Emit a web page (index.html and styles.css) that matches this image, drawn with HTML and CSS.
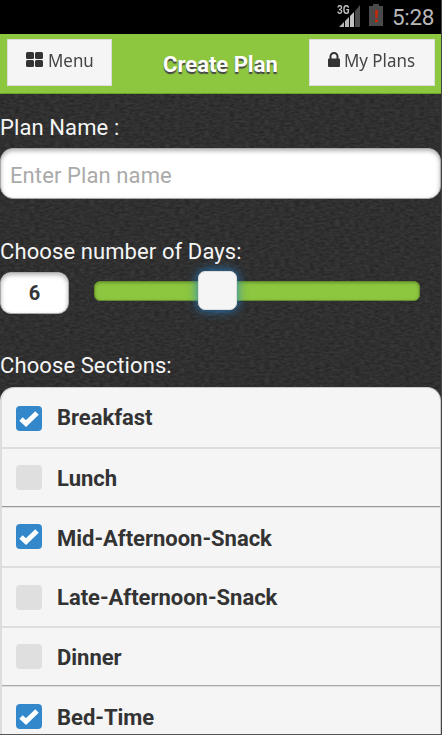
FILE: index.html
```html
<!DOCTYPE html>
<html lang="en">
<head>
<meta charset="utf-8">
<title>Create Plan</title>
<link rel="stylesheet" href="styles.css">
</head>
<body>
<svg class="texture" width="442" height="641" aria-hidden="true">
  <filter id="grain" x="0" y="0" width="100%" height="100%" color-interpolation-filters="sRGB">
    <feTurbulence type="fractalNoise" baseFrequency="0.2 0.45" numOctaves="3" seed="4"/>
    <feColorMatrix values="0.12 0 0 0 0.127  0.12 0 0 0 0.127  0.12 0 0 0 0.127  0 0 0 0 1"/>
  </filter>
  <rect width="442" height="641" filter="url(#grain)"/>
</svg>
<div class="screen">
  <div class="status">
    <svg class="signal" width="24" height="24" viewBox="0 0 24 24">
      <path d="M2 23L7 18V23Z" fill="#b5b5b5"/>
      <path d="M8 17L12 13V23H8Z" fill="#b5b5b5"/>
      <path d="M13 12L17 8V23H13Z" fill="#c4c4c4"/>
      <path d="M18 7L23 1V23H18Z" fill="#4c4c4c"/>
    </svg>
    <span class="network">3G</span>
    <svg class="battery" width="14" height="22" viewBox="0 0 14 22">
      <path d="M0 2H4V0H10V2H14V22H0Z" fill="#4a4a4a"/>
      <path d="M6 6H9L8.500 14H6.500ZM6 15.500H9V18H6Z" fill="#c62808"/>
    </svg>
    <span class="time">5:28</span>
  </div>
  <header class="header">
    <div class="button menu">
      <svg width="17" height="15" viewBox="0 0 17 15"><g fill="#333"><rect width="8" height="7" rx="1.500"/><rect x="9" width="8" height="7" rx="1.500"/><rect y="8" width="8" height="7" rx="1.500"/><rect x="9" y="8" width="8" height="7" rx="1.500"/></g></svg>
      <span class="menu-text">Menu</span>
    </div>
    <h1 class="title"><span>Create Plan</span></h1>
    <div class="button plans">
      <svg width="12" height="15" viewBox="0 0 12 15"><path d="M2.500 7V4.500a3.500 3.500 0 0 1 7 0V7" fill="none" stroke="#333" stroke-width="2"/><rect y="6.500" width="12" height="8.500" rx="1" fill="#333"/></svg>
      <span class="plans-text">My Plans</span>
    </div>
  </header>
  <main class="form">
    <div class="label name-label"><span>Plan Name :</span></div>
    <div class="field"><span class="placeholder">Enter Plan name</span></div>
    <div class="label days-label"><span>Choose number of Days:</span></div>
    <div class="days">
      <div class="count">6</div>
      <div class="track"><div class="handle"></div></div>
    </div>
    <div class="label sections-label"><span>Choose Sections:</span></div>
    <div class="list">
      <div class="row first"><svg class="box on" viewBox="0 0 25 25"><path d="M4.500 13L9.500 17.500L20.500 7" /></svg><span>Breakfast</span></div>
      <div class="row lunch"><div class="box"></div><span>Lunch</span></div>
      <div class="row mid"><svg class="box on" viewBox="0 0 25 25"><path d="M4.500 13L9.500 17.500L20.500 7" /></svg><span>Mid-Afternoon-Snack</span></div>
      <div class="row late"><div class="box"></div><span>Late-Afternoon-Snack</span></div>
      <div class="row dinner"><div class="box"></div><span>Dinner</span></div>
      <div class="row bed"><svg class="box on" viewBox="0 0 25 25"><path d="M4.500 13L9.500 17.500L20.500 7" /></svg><span>Bed-Time</span></div>
    </div>
  </main>
</div>
</body>
</html>
```
FILE: styles.css
```css
* { box-sizing: border-box; }
body { margin: 0; width: 442px; height: 735px; overflow: hidden; background: #2f2f2f; font-family: Roboto, sans-serif; }
.texture { position: absolute; top: 94px; left: 0; }
.screen { position: relative; width: 442px; height: 735px; overflow: hidden; border-right: 1px solid #444; border-bottom: 1px solid #555; }
.status { position: relative; height: 34px; background: #000; display: flex; justify-content: flex-end; align-items: flex-start; padding-right: 8px; }
.signal { margin: 4px 8px 0 0; }
.network { position: absolute; left: 337px; top: 4px; font-size: 12px; line-height: 13px; font-weight: 700; color: #bbb; transform: scaleX(.84); transform-origin: left; text-shadow: 1px 0 #000; }
.battery { margin: 4px 9px 0 0; }
.time { width: 41px; margin-top: 4px; font-size: 22.500px; line-height: 27px; color: #b8b8b8; white-space: nowrap; letter-spacing: -0.300px; }
.header { height: 60px; background: #8dc63f; border-bottom: 1px solid #6fa12d; display: flex; justify-content: space-between; align-items: flex-start; padding: 5px 6px 0 7px; }
.button { height: 47px; background: #f5f5f5; border: 1px solid #ddd; display: flex; padding-top: 12px; font-family: "Noto Sans", sans-serif; font-size: 18px; line-height: 18px; color: #444; white-space: nowrap; }
.button svg { flex: none; margin-top: 0; }
.button span { margin-top: -1px; transform: scaleX(.94); transform-origin: left; }
.menu { width: 105px; padding-left: 18px; gap: 5px; }
.plans { width: 126px; padding-left: 18px; gap: 4px; }
.title { margin: 12px 0 0 21px; width: 116px; font-size: 22px; line-height: 28px; font-weight: 700; color: #fff; text-shadow: 0 2px 1px #444; white-space: nowrap; }
.label { color: #f5f5f5; font-size: 22px; line-height: 28px; white-space: nowrap; letter-spacing: 0.100px; }
.name-label { margin-top: 20px; height: 35px; }
.field { height: 51px; margin-top: -1px; background: #fff; border: 1px solid #aaa; border-radius: 13px; box-shadow: inset 0 2px 4px rgba(0,0,0,.3); padding: 13px 9px; font-size: 22px; line-height: 28px; letter-spacing: 0.100px; color: #aaa; }
.days-label { margin-top: 39px; height: 33px; }
.days { display: flex; align-items: center; height: 43px; }
.count { width: 69px; height: 42px; border: 1px solid #aaa; border-radius: 11px; background: #fff; box-shadow: inset 0 2px 4px rgba(0,0,0,.3); font-size: 20px; line-height: 41px; font-weight: 700; text-align: center; color: #333; }
.track { width: 326px; height: 20px; margin: -3px 0 0 25px; border: 1px solid #64902b; border-radius: 6px; background: #8dc63f; box-shadow: inset 0 1px 3px rgba(0,0,0,.25); }
.handle { width: 39px; height: 39px; margin: -11px 0 0 103px; border: 1px solid #ddd; border-radius: 7px; background: #f5f5f5; box-shadow: 0 0 11px #2784cf; }
.sections-label { margin-top: 38px; height: 35px; }
.list { border: 1px solid #ccc; border-left: 2px solid #ddd; border-radius: 14px 14px 0 0; background: #f5f5f5; overflow: hidden; }
.row { display: flex; align-items: center; padding-left: 14px; gap: 15px; font-size: 22px; font-weight: 700; color: #333; white-space: nowrap; border-bottom: 2px solid #ddd; letter-spacing: -0.020px; }
.row > span { line-height: 28px; }
.box { flex: none; width: 26px; height: 25px; border-radius: 4px; background: #dfdfdf; }
.on { background: #3388cc; }
.on path { fill: none; stroke: #fff; stroke-width: 5; }
.first { height: 61px; }
.first > .box { margin-top: 2px; }
.lunch { height: 58px; border-bottom: 1px solid #999; }
.mid { height: 61px; border-top: 1px solid #ddd; }
.late { height: 60px; }
.dinner { height: 58px; border-bottom: 1px solid #aaa; }
.bed { height: 61px; border-top: 1px solid #ddd; }
.lunch > span { padding-top: 2px; }
.mid > span { padding-top: 3px; }
.late > span { padding-top: 1px; }
.dinner > span { padding-top: 2px; }
.bed > span { padding-top: 4px; }
.mid > .box { margin-bottom: 1px; }
```
